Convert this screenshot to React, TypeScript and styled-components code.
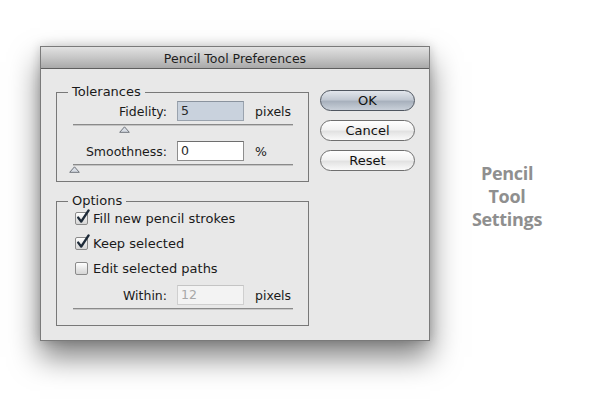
import React from "react";
import styled, { createGlobalStyle } from "styled-components";

const Global = createGlobalStyle`
  html, body { margin: 0; padding: 0; background: #ffffff; }
  body { font-family: "DejaVu Sans", "Liberation Sans", sans-serif; }
`;

const Page = styled.div`
  width: 600px;
  height: 414px;
  display: flex;
  align-items: flex-start;
  padding: 46px 0 0 40px;
  box-sizing: border-box;
  background: #ffffff;
  overflow: hidden;
`;

const Dialog = styled.div`
  width: 390px;
  height: 295px;
  box-sizing: border-box;
  border: 1px solid #7a7a7a;
  background: #e8e8e8;
  display: flex;
  flex-direction: column;
  box-shadow: 0 16px 28px rgba(0, 0, 0, 0.5), 0 0 10px rgba(0, 0, 0, 0.18);
`;

const TitleBar = styled.div`
  height: 20px;
  flex: none;
  border-bottom: 1px solid #5e5e5e;
  background: linear-gradient(#e2e2e2, #c4c4c4 55%, #a9a9a9);
  display: flex;
  align-items: center;
  justify-content: center;
  font-size: 12.5px;
  color: #1e1e1e;
  padding-top: 1px;
`;

const Body = styled.div`
  display: flex;
  align-items: flex-start;
  padding: 15px 0 0 15px;
`;

const MainColumn = styled.div`
  width: 253px;
  display: flex;
  flex-direction: column;
  gap: 11px;
`;

const Group = styled.fieldset`
  margin: 0;
  box-sizing: border-box;
  width: 253px;
  border: 1px solid #787878;
  padding: 0;
  min-width: 0;
`;

const GroupContent = styled.div<{ $pt: number; $pb: number }>`
  padding: ${(p) => p.$pt}px 16px ${(p) => p.$pb}px 16px;
`;

const Legend = styled.legend`
  margin-left: 11px;
  padding: 0 4px;
  font-size: 13px;
  line-height: 16px;
  color: #1a1a1a;
`;

const FieldRow = styled.div<{ $mt?: number }>`
  display: grid;
  grid-template-columns: 94px 67px auto;
  column-gap: 10px;
  align-items: center;
  height: 20px;
  margin-top: ${(p) => p.$mt ?? 0}px;
`;

const Label = styled.span`
  text-align: right;
  font-size: 12.5px;
  color: #1a1a1a;
  white-space: nowrap;
`;

const Field = styled.div<{ $focus?: boolean; $disabled?: boolean }>`
  box-sizing: border-box;
  height: 20px;
  border: 1px solid ${(p) => (p.$focus ? "#9aa3ae" : p.$disabled ? "#cfcfcf" : "#8e8e8e")};
  border-top-color: ${(p) => (p.$focus ? "#8a939e" : p.$disabled ? "#c4c4c4" : "#6e6e6e")};
  background: ${(p) => (p.$focus ? "#c9d2dd" : p.$disabled ? "#f3f3f3" : "#ffffff")};
  color: ${(p) => (p.$disabled ? "#a8a8a8" : "#2a2a2a")};
  font-size: 12.5px;
  line-height: 18px;
  padding-left: 3px;
`;

const Unit = styled.span`
  font-size: 12.5px;
  color: #1a1a1a;
  padding-left: 1px;
`;

const Slider = styled.div<{ $mt: number }>`
  position: relative;
  height: 9px;
  margin-top: ${(p) => p.$mt}px;
  border-top: 1px solid #8a8a8a;
  box-shadow: inset 0 1px 0 #c4c4c4;
  width: 220px;
`;

const Thumb = styled.svg`
  position: absolute;
  top: 1px;
  width: 11px;
  height: 7px;
`;

const Separator = styled.div`
  width: 220px;
  height: 1px;
  margin-top: 3px;
  background: #8a8a8a;
  box-shadow: 0 1px 0 #c8c8c8;
`;

const CheckRow = styled.div<{ $mt?: number }>`
  display: flex;
  align-items: center;
  gap: 5px;
  height: 18px;
  padding-left: 2px;
  margin-top: ${(p) => p.$mt ?? 0}px;
  font-size: 13px;
  color: #1a1a1a;
`;

const Box = styled.span`
  position: relative;
  width: 13px;
  height: 13px;
  box-sizing: border-box;
  border: 1px solid #8a8a8a;
  border-radius: 2px;
  background: linear-gradient(#ffffff, #e4e4e4 60%, #d6d6d6);
  flex: none;
`;

const Tick = styled.svg`
  position: absolute;
  left: 0px;
  top: -4px;
  width: 14px;
  height: 15px;
  overflow: visible;
`;

const ButtonColumn = styled.div`
  margin-left: 11px;
  margin-top: 6px;
  display: flex;
  flex-direction: column;
  gap: 9px;
`;

const Button = styled.div<{ $default?: boolean }>`
  box-sizing: border-box;
  width: 95px;
  height: 21px;
  border-radius: 11px;
  border: 1px solid ${(p) => (p.$default ? "#4f5660" : "#6f6f6f")};
  background: ${(p) =>
    p.$default
      ? "linear-gradient(#e2e6ec, #c2c9d3 45%, #a8b1bd 55%, #c9d0d9)"
      : "linear-gradient(#ffffff, #f2f2f2 45%, #e2e2e2 55%, #fafafa)"};
  display: flex;
  align-items: center;
  justify-content: center;
  font-size: 13px;
  color: #111;
`;

const SideText = styled.div`
  width: 154px;
  margin-top: 116px;
  text-align: center;
  font-family: "Open Sans", "DejaVu Sans", sans-serif;
  font-weight: 700;
  font-size: 18px;
  line-height: 23px;
  letter-spacing: -0.3px;
  color: #8f8f8f;
`;

const ThumbIcon = ({ left }: { left: number }) => (
  <Thumb style={{ left }} viewBox="0 0 11 7">
    <path d="M5.5 0.8 L10.3 6.3 L0.7 6.3 Z" fill="#d9dee6" stroke="#6f747b" strokeWidth="1" />
  </Thumb>
);

const Check = ({ checked, label, mt }: { checked: boolean; label: string; mt?: number }) => (
  <CheckRow $mt={mt}>
    <Box>
      {checked && (
        <Tick viewBox="0 0 14 15">
          <path
            d="M2.2 8.6 L5.2 12.6 L12.6 1.4"
            fill="none"
            stroke="#1d2a38"
            strokeWidth="2.4"
            strokeLinecap="round"
            strokeLinejoin="round"
          />
        </Tick>
      )}
    </Box>
    <span>{label}</span>
  </CheckRow>
);

export default function App() {
  return (
    <>
      <Global />
      <Page>
        <Dialog>
          <TitleBar>Pencil Tool Preferences</TitleBar>
          <Body>
            <MainColumn>
              <Group>
                <Legend>Tolerances</Legend>
                <GroupContent $pt={1} $pb={7}>
                  <FieldRow>
                    <Label>Fidelity:</Label>
                    <Field $focus>5</Field>
                    <Unit>pixels</Unit>
                  </FieldRow>
                  <Slider $mt={3}>
                    <ThumbIcon left={46} />
                  </Slider>
                  <FieldRow $mt={7}>
                    <Label>Smoothness:</Label>
                    <Field>0</Field>
                    <Unit>%</Unit>
                  </FieldRow>
                  <Slider $mt={3}>
                    <ThumbIcon left={-4} />
                  </Slider>
                </GroupContent>
              </Group>
              <Group>
                <Legend>Options</Legend>
                <GroupContent $pt={0} $pb={16}>
                  <Check checked label="Fill new pencil strokes" />
                  <Check checked label="Keep selected" mt={7} />
                  <Check checked={false} label="Edit selected paths" mt={7} />
                  <FieldRow $mt={8}>
                    <Label>Within:</Label>
                    <Field $disabled>12</Field>
                    <Unit>pixels</Unit>
                  </FieldRow>
                  <Separator />
                </GroupContent>
              </Group>
            </MainColumn>
            <ButtonColumn>
              <Button $default>OK</Button>
              <Button>Cancel</Button>
              <Button>Reset</Button>
            </ButtonColumn>
          </Body>
        </Dialog>
        <SideText>
          Pencil
          <br />
          Tool
          <br />
          Settings
        </SideText>
      </Page>
    </>
  );
}
